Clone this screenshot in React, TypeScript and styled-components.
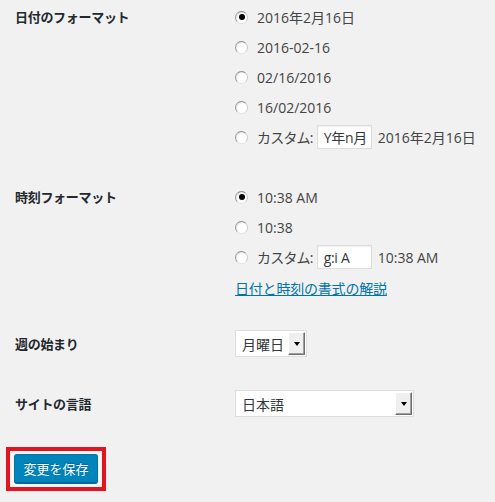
import React from "react";
import styled, { createGlobalStyle } from "styled-components";

const GlobalStyle = createGlobalStyle`
  html, body {
    margin: 0;
    padding: 0;
    background: #f1f1f1;
  }
  body {
    font-family: "Open Sans", "Noto Sans CJK JP", sans-serif;
    color: #444;
  }
`;

interface Choice {
  text: string;
  checked?: boolean;
}

const dateChoices: Choice[] = [
  { text: "2016年2月16日", checked: true },
  { text: "2016-02-16" },
  { text: "02/16/2016" },
  { text: "16/02/2016" },
];

const timeChoices: Choice[] = [
  { text: "10:38 AM", checked: true },
  { text: "10:38" },
];

function Radio({ checked }: { checked?: boolean }) {
  return <RadioCircle>{checked && <RadioDot />}</RadioCircle>;
}

function SelectBox({ value, width }: { value: string; width: number }) {
  return (
    <Select $width={width}>
      <SelectText>{value}</SelectText>
      <ArrowButton>
        <Triangle />
      </ArrowButton>
    </Select>
  );
}

function App() {
  return (
    <Page>
      <GlobalStyle />
      <Row $gap={30}>
        <Label $line={30}>日付のフォーマット</Label>
        <Field>
          {dateChoices.map((c) => (
            <Option key={c.text}>
              <Radio checked={c.checked} />
              <span>{c.text}</span>
            </Option>
          ))}
          <Option>
            <Radio />
            <CustomLabel>カスタム:</CustomLabel>
            <TextInput>Y年n月</TextInput>
            <span>2016年2月16日</span>
          </Option>
        </Field>
      </Row>

      <Row $gap={26}>
        <Label $line={30}>時刻フォーマット</Label>
        <Field>
          {timeChoices.map((c) => (
            <Option key={c.text}>
              <Radio checked={c.checked} />
              <span>{c.text}</span>
            </Option>
          ))}
          <Option>
            <Radio />
            <CustomLabel>カスタム:</CustomLabel>
            <TextInput>g:i A</TextInput>
            <span>10:38 AM</span>
          </Option>
          <HelpLink href="#">日付と時刻の書式の解説</HelpLink>
        </Field>
      </Row>

      <Row $gap={33}>
        <Label $line={27}>週の始まり</Label>
        <Field>
          <SelectBox value="月曜日" width={72} />
        </Field>
      </Row>

      <Row $gap={30}>
        <Label $line={27}>サイトの言語</Label>
        <Field>
          <SelectBox value="日本語" width={179} />
        </Field>
      </Row>

      <Highlight>
        <SaveButton>変更を保存</SaveButton>
      </Highlight>
    </Page>
  );
}

export default App;

const Page = styled.div`
  padding-top: 2px;
  width: 495px;
`;

const Row = styled.div<{ $gap: number }>`
  display: flex;
  align-items: flex-start;
  margin-bottom: ${(p) => p.$gap}px;
`;

const Label = styled.div<{ $line: number }>`
  box-sizing: border-box;
  width: 235px;
  padding-left: 15px;
  flex-shrink: 0;
  font-family: "Noto Sans CJK JP", sans-serif;
  font-weight: 700;
  font-size: 13px;
  letter-spacing: -0.3px;
  line-height: ${(p) => p.$line}px;
  color: #23282d;
`;

const Field = styled.div`
  display: flex;
  flex-direction: column;
`;

const Option = styled.div`
  display: flex;
  align-items: center;
  height: 30px;
  font-size: 14px;
  color: #444;
  white-space: nowrap;
`;

const CustomLabel = styled.span`
  letter-spacing: -0.8px;
`;

const RadioCircle = styled.span`
  width: 13px;
  height: 13px;
  box-sizing: border-box;
  border-radius: 50%;
  border: 1px solid;
  border-color: #8e8e8e #c9c9c9 #e2e2e2 #9a9a9a;
  background: #fff;
  box-shadow: inset 1px 1px 1px rgba(0, 0, 0, 0.1);
  margin-right: 9px;
  display: flex;
  align-items: center;
  justify-content: center;
  flex-shrink: 0;
`;

const RadioDot = styled.span`
  width: 6px;
  height: 6px;
  border-radius: 50%;
  background: #000;
`;

const TextInput = styled.span`
  display: inline-flex;
  align-items: center;
  box-sizing: border-box;
  width: 55px;
  height: 24px;
  margin: 0 6px 0 4px;
  padding: 0 4px 0 6px;
  background: #fff;
  border: 1px solid #ddd;
  box-shadow: inset 0 1px 2px rgba(0, 0, 0, 0.07);
  color: #32373c;
  letter-spacing: -0.3px;
`;

const HelpLink = styled.a`
  display: block;
  margin-top: 2px;
  line-height: 30px;
  font-size: 14px;
  letter-spacing: -0.2px;
  color: #0073aa;
  text-decoration: underline;
`;

const Select = styled.div<{ $width: number }>`
  display: flex;
  align-items: center;
  justify-content: space-between;
  box-sizing: border-box;
  width: ${(p) => p.$width}px;
  height: 27px;
  background: #fff;
  border: 1px solid #ddd;
  padding: 1px 1px 1px 6px;
`;

const SelectText = styled.span`
  font-family: "Noto Sans CJK JP", sans-serif;
  font-size: 14px;
  color: #32373c;
`;

const ArrowButton = styled.span`
  display: flex;
  align-items: center;
  justify-content: center;
  box-sizing: border-box;
  width: 17px;
  height: 23px;
  background: #efefef;
  border-top: 1px solid #fff;
  border-left: 1px solid #fff;
  border-right: 1px solid #6e6e6e;
  border-bottom: 1px solid #6e6e6e;
  box-shadow: inset -1px -1px 0 #a0a0a0;
`;

const Triangle = styled.span`
  width: 0;
  height: 0;
  border-left: 3.5px solid transparent;
  border-right: 3.5px solid transparent;
  border-top: 4px solid #000;
`;

const Highlight = styled.div`
  box-sizing: border-box;
  width: 100px;
  height: 44px;
  margin-left: 6px;
  border: 4px solid #e1141f;
  background: #f7f7f7;
  padding: 3px 0 0 4px;
`;

const SaveButton = styled.button`
  box-sizing: border-box;
  width: 84px;
  height: 29px;
  padding: 0;
  border: 1px solid #0073aa;
  border-bottom-color: #006799;
  border-radius: 3px;
  background: #0085ba;
  box-shadow: 0 1px 0 #006799;
  color: #fff;
  font-family: "Noto Sans CJK JP", sans-serif;
  font-size: 13px;
  text-shadow: 0 -1px 1px #006799;
  cursor: pointer;
`;
